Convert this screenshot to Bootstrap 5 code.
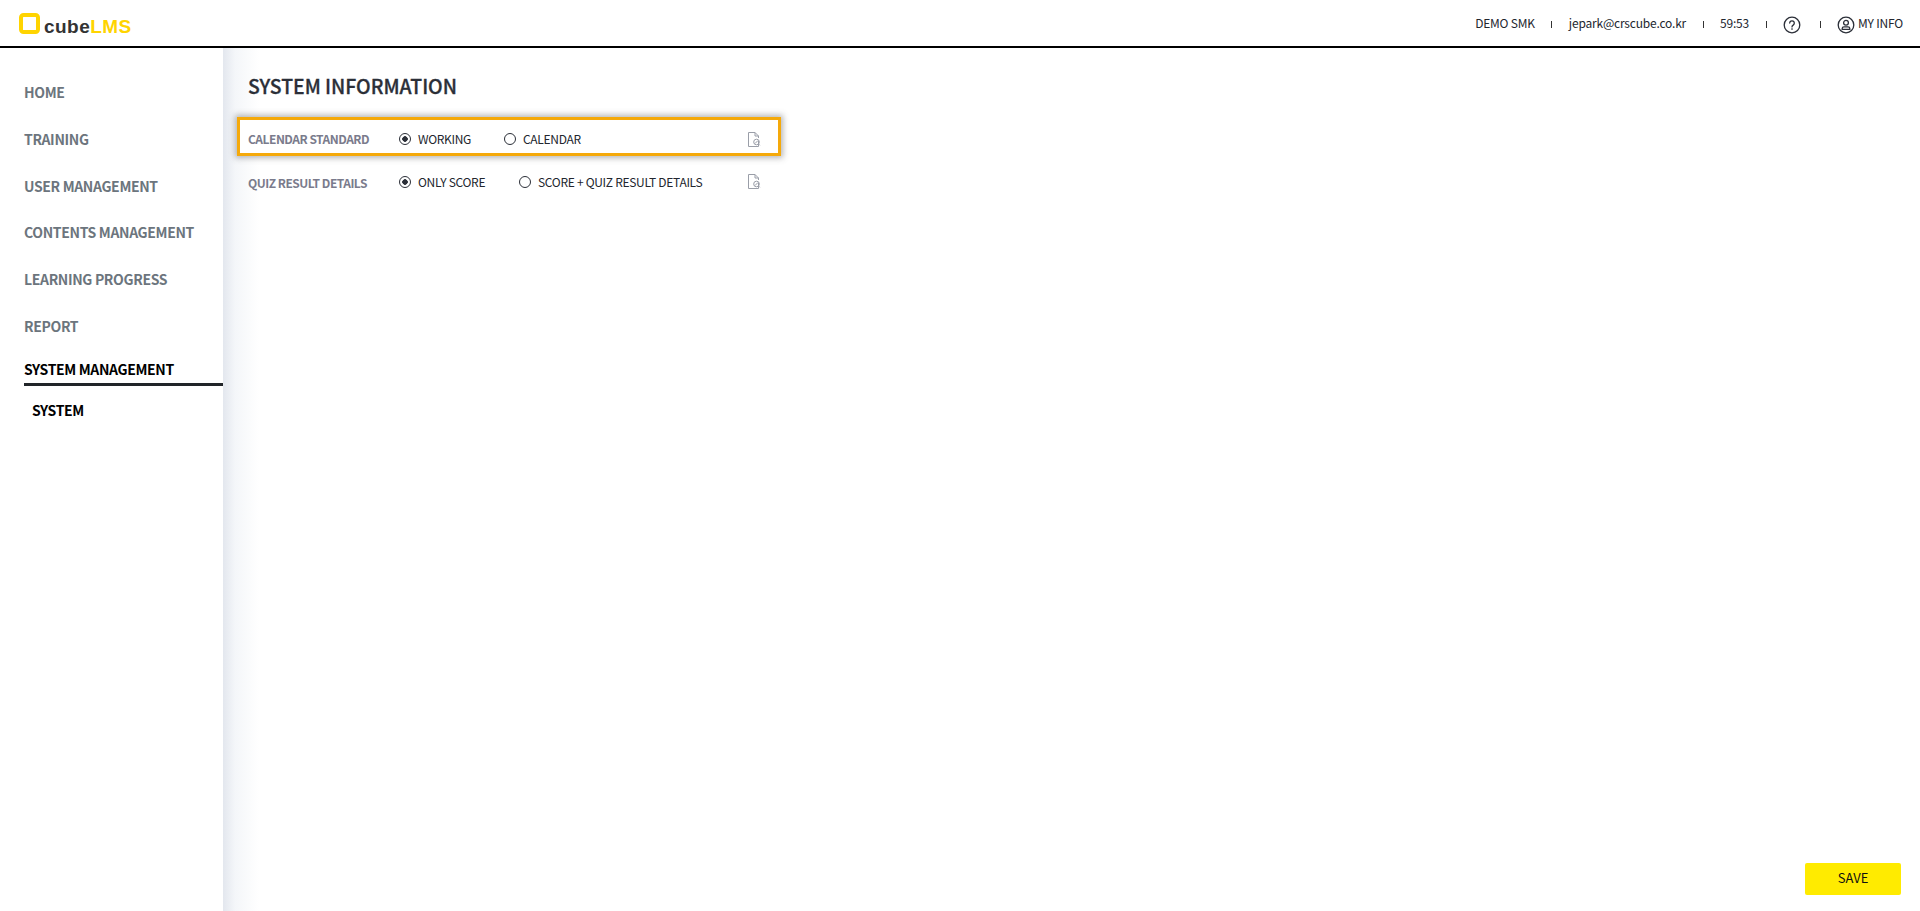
<!DOCTYPE html>
<html lang="en">
<head>
<meta charset="utf-8">
<title>cubeLMS</title>
<link href="https://cdn.jsdelivr.net/npm/bootstrap@5.3.0/dist/css/bootstrap.min.css" rel="stylesheet">
<style>
html,body{height:100%;}
body{font-family:"Noto Sans CJK KR","Noto Sans",sans-serif;background:#fff;color:#2b2f38;overflow:hidden;}
.shell{height:911px;}
.topbar{height:48px;border-bottom:2px solid #000;padding:0 17px 0 19px;flex:none;}
.logo-text{font-family:"Liberation Sans",sans-serif;font-weight:700;font-size:19px;line-height:1;margin-left:4px;margin-top:7px;letter-spacing:.45px;}
.logo-cube{color:#333;}
.logo-lms{color:#ffd400;}
.top-info{font-size:12px;color:#22262e;line-height:1;letter-spacing:-.2px;}
.top-icon{margin-top:3px;}
.top-icon-help{margin-right:2px;}
.top-icon-user{margin-right:3px;}
.top-sep{width:1px;height:7px;background:#333;margin:3px 16.5px 0;}
.side{width:223px;flex:none;background:#fff;padding:21px 0 0 24px;}
.side-item{display:block;height:46.8px;line-height:46.8px;font-size:14px;font-weight:700;color:#6c757d;text-decoration:none;letter-spacing:-.35px;}
.side-active{display:block;color:#000;font-size:14px;font-weight:700;letter-spacing:-.35px;text-decoration:none;border-bottom:3px solid #212529;height:39px;line-height:45px;margin-top:-3px;}
.side-sub{display:block;color:#000;font-size:14px;font-weight:700;letter-spacing:-.35px;text-decoration:none;margin:14px 0 0 8px;line-height:20px;}
.main-pane{background:linear-gradient(90deg,#e3e7ee 0,#f4f6f9 12px,#fff 36px);padding:0 19px 16px 14px;min-width:0;}
.page-title{font-size:19.4px;font-weight:500;-webkit-text-stroke:.3px #2b2f38;color:#2b2f38;margin:26px 0 19px 11px;line-height:24px;}
.set-row{width:544px;height:37px;padding:0 20px 0 11px;}
.set-row-on{height:39px;padding-top:5px;outline:3px solid #f5a90a;outline-offset:-3px;box-shadow:0 0 6px 2px rgba(90,90,90,.45);background:#fff;}
.set-row-plain{margin-top:7px;}
.set-label{width:151px;font-size:12px;font-weight:700;color:#7a7b8c;flex:none;letter-spacing:-.5px;}
.set-row-plain .set-label{padding-top:3px;}
.rad{font-size:12px;color:#22262e;line-height:1;letter-spacing:-.3px;}
.rad-dot{width:12px;height:12px;border:1.5px solid #2b2f38;border-radius:50%;margin-right:7px;flex:none;}
.rad-dot.on{background:radial-gradient(circle,#2b2f38 0 2.5px,#fff 3px);}
.doc-icon{stroke:#9a9ea8;}
.save-btn{width:96px;height:32px;background:#ffeb00;border:0;border-radius:2px;font-size:13px;color:#111;padding:0 0 2px;}
.save-btn:hover{background:#ffeb00;color:#111;}
</style>
</head>
<body>
<div class="shell d-flex flex-column">
  <header class="topbar d-flex align-items-center justify-content-between">
    <div class="d-flex align-items-center">
      <svg width="21" height="21" viewBox="0 0 21 21" fill="none"><rect x="2" y="2" width="17" height="17" rx="2.5" stroke="#ffd400" stroke-width="4"/></svg>
      <span class="logo-text"><span class="logo-cube">cube</span><span class="logo-lms">LMS</span></span>
    </div>
    <div class="top-info d-flex align-items-center">
      <span>DEMO SMK</span><span class="top-sep"></span>
      <span>jepark@crscube.co.kr</span><span class="top-sep"></span>
      <span>59:53</span><span class="top-sep"></span>
      <svg class="top-icon top-icon-help" width="18" height="18" viewBox="0 0 18 18" fill="none" stroke="#2b2f38" stroke-width="1.3"><circle cx="9" cy="9" r="7.8"/><path d="M6.7 7.1a2.3 2.3 0 1 1 3.5 2c-.8.5-1.2.9-1.2 1.8" stroke-linecap="round"/><circle cx="9" cy="13" r=".5" fill="#2b2f38" stroke-width=".6"/></svg>
      <span class="top-sep"></span>
      <svg class="top-icon top-icon-user" width="18" height="18" viewBox="0 0 18 18" fill="none" stroke="#2b2f38" stroke-width="1.3"><circle cx="9" cy="9" r="7.8"/><circle cx="9" cy="6.8" r="2.4"/><path d="M5.2 13.4v-.9c0-1 .8-1.7 1.8-1.7h4c1 0 1.8.7 1.8 1.7v.9z"/></svg>
      <span>MY INFO</span>
    </div>
  </header>
  <div class="d-flex flex-grow-1" style="min-height:0">
    <nav class="side">
      <a class="side-item" href="#">HOME</a>
      <a class="side-item" href="#">TRAINING</a>
      <a class="side-item" href="#">USER MANAGEMENT</a>
      <a class="side-item" href="#">CONTENTS MANAGEMENT</a>
      <a class="side-item" href="#">LEARNING PROGRESS</a>
      <a class="side-item" href="#">REPORT</a>
      <a class="side-active" href="#">SYSTEM MANAGEMENT</a>
      <a class="side-sub" href="#">SYSTEM</a>
    </nav>
    <main class="main-pane flex-grow-1 d-flex flex-column">
      <h1 class="page-title">SYSTEM INFORMATION</h1>
      <div class="set-row set-row-on d-flex align-items-center">
        <span class="set-label">CALENDAR STANDARD</span>
        <span class="rad d-flex align-items-center" style="width:105px"><span class="rad-dot on"></span>WORKING</span>
        <span class="rad d-flex align-items-center"><span class="rad-dot"></span>CALENDAR</span>
        <svg class="doc-icon ms-auto" width="14" height="17" viewBox="0 0 14 17" fill="none" stroke-width="1"><path d="M8 1.5H1.5v14h10V10M8 1.5v3.5h3.5M8 1.5l3.5 3.5V7"/><circle cx="9.5" cy="11" r="2.8"/><path d="M8 12.5l3-3M11.5 13l1.3 1.3"/></svg>
      </div>
      <div class="set-row set-row-plain d-flex align-items-center">
        <span class="set-label">QUIZ RESULT DETAILS</span>
        <span class="rad d-flex align-items-center" style="width:120px"><span class="rad-dot on"></span>ONLY SCORE</span>
        <span class="rad d-flex align-items-center"><span class="rad-dot"></span>SCORE + QUIZ RESULT DETAILS</span>
        <svg class="doc-icon ms-auto" width="14" height="17" viewBox="0 0 14 17" fill="none" stroke-width="1"><path d="M8 1.5H1.5v14h10V10M8 1.5v3.5h3.5M8 1.5l3.5 3.5V7"/><circle cx="9.5" cy="11" r="2.8"/><path d="M8 12.5l3-3M11.5 13l1.3 1.3"/></svg>
      </div>
      <div class="mt-auto d-flex justify-content-end">
        <button type="button" class="btn save-btn">SAVE</button>
      </div>
    </main>
  </div>
</div>
<script src="https://cdn.jsdelivr.net/npm/bootstrap@5.3.0/dist/js/bootstrap.bundle.min.js"></script>
</body>
</html>
